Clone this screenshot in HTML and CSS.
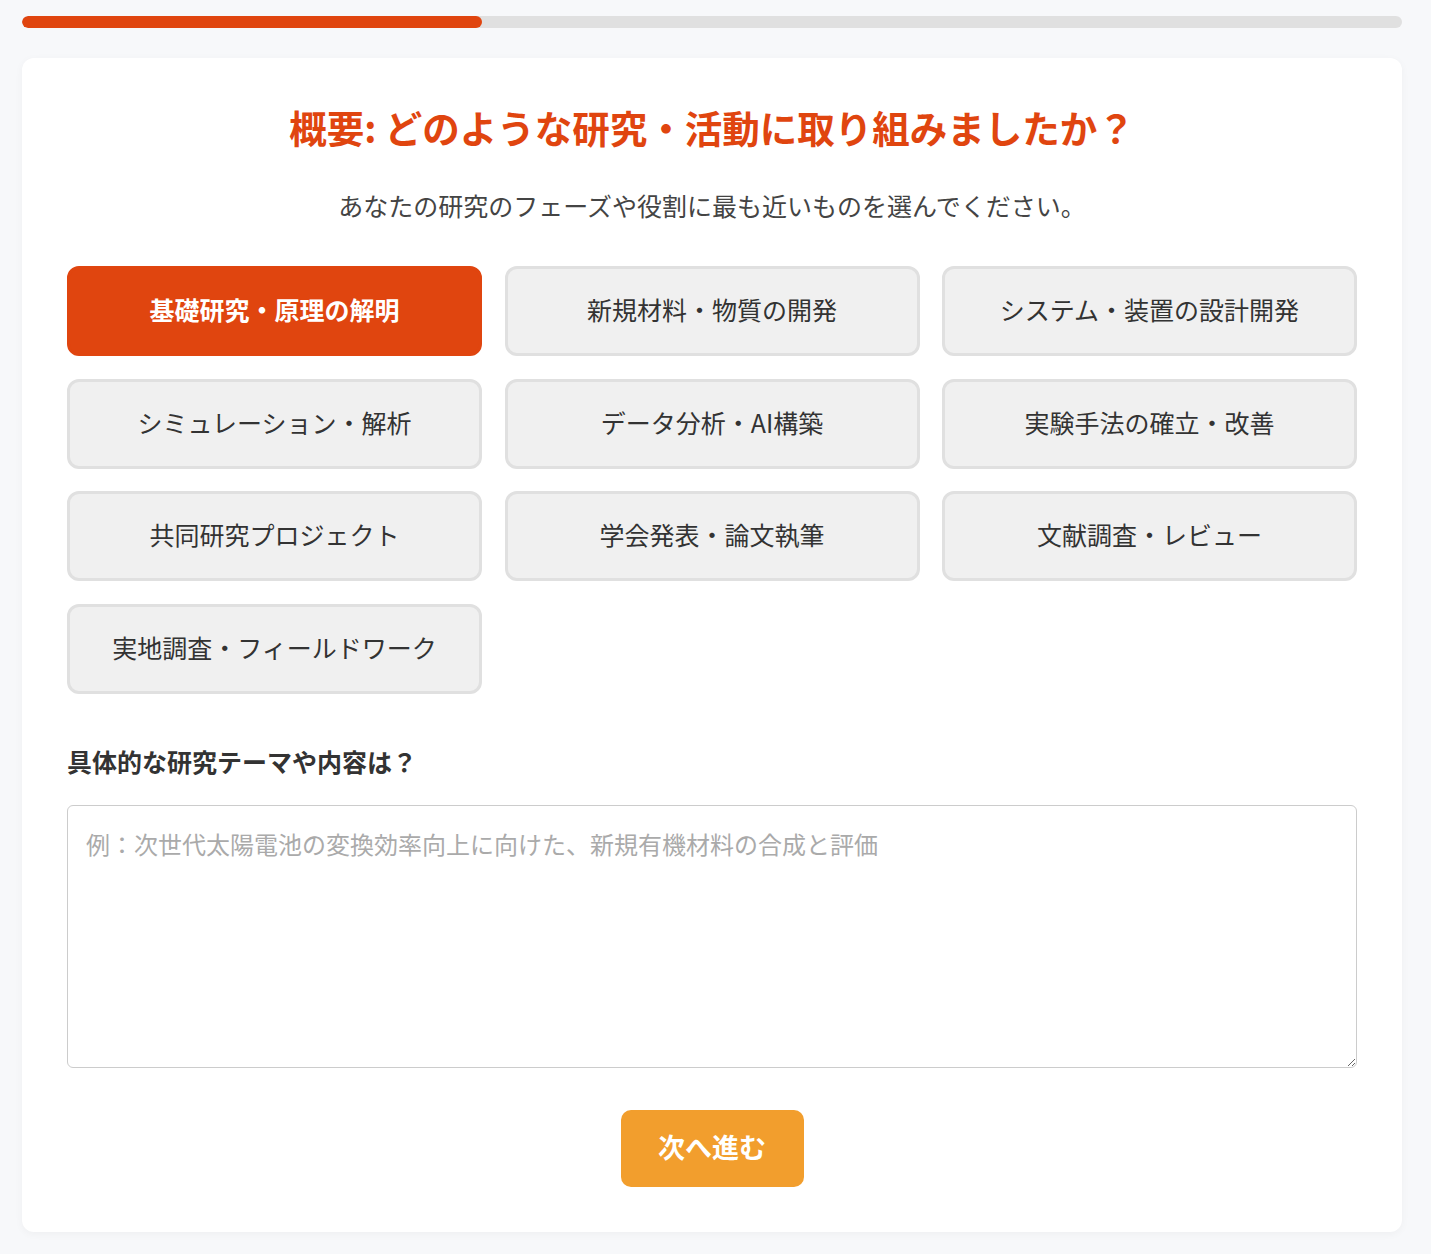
FILE: index.html
```html
<!DOCTYPE html>
<html lang="ja">
<head>
	<meta charset="utf-8">
	<title>研究概要</title>
	<link rel="stylesheet" href="styles.css">
</head>
<body>
<div class="wrap">
	<div class="progress"><div class="progress-fill" style="width:33.33%"></div></div>

	<div class="card">
		<h1 class="title">概要: どのような研究・活動に取り組みましたか？</h1>
		<p class="lead">あなたの研究のフェーズや役割に最も近いものを選んでください。</p>

		<div class="options">
			<button class="opt selected">基礎研究・原理の解明</button>
			<button class="opt">新規材料・物質の開発</button>
			<button class="opt">システム・装置の設計開発</button>
			<button class="opt">シミュレーション・解析</button>
			<button class="opt">データ分析・AI構築</button>
			<button class="opt">実験手法の確立・改善</button>
			<button class="opt">共同研究プロジェクト</button>
			<button class="opt">学会発表・論文執筆</button>
			<button class="opt">文献調査・レビュー</button>
			<button class="opt">実地調査・フィールドワーク</button>
		</div>

		<label class="label" for="theme">具体的な研究テーマや内容は？</label>
		<textarea id="theme" class="theme" placeholder="例：次世代太陽電池の変換効率向上に向けた、新規有機材料の合成と評価"></textarea>

		<div class="actions">
			<button class="next">次へ進む</button>
		</div>
	</div>
</div>
</body>
</html>
```

FILE: styles.css
```css
html,body{margin:0;padding:0;}
body{background:#f7f8fa;color:#333;font:24px/1.5 "Noto Sans CJK JP","Noto Sans",sans-serif;}
h1,p{margin:0;}

.wrap{width:1380px;margin:0 0 0 22px;padding:16px 0 22px;}

.progress{height:12px;background:#e0e0e0;border-radius:6px;overflow:hidden;}
.progress-fill{height:100%;background:#e0450f;border-radius:6px;}

.card{margin-top:30px;background:#fff;border-radius:12px;padding:42px 45px 45px;box-shadow:0 2px 8px rgba(0,0,0,0.04);}

.title{color:#e0450f;font-size:37.5px;font-weight:700;text-align:center;line-height:54px;}
.lead{color:#444;font-size:25px;line-height:36px;text-align:center;margin-top:33px;}

.options{display:grid;grid-template-columns:repeat(3,1fr);gap:22.5px;margin-top:43px;}
.opt{height:90px;padding:0 0 4px;background:#f0f0f0;border:3px solid #e0e0e0;border-radius:12px;color:#333;font:25px/36px "Noto Sans CJK JP","Noto Sans",sans-serif;cursor:pointer;}
.opt.selected{background:#e0450f;border-color:#e0450f;color:#fff;font-weight:700;}

.label{display:block;margin-top:49px;font-size:25px;line-height:36px;font-weight:700;color:#333;}
.theme{display:block;box-sizing:border-box;width:100%;height:263px;margin-top:26px;padding:20px 18px;border:1px solid #ccc;border-radius:6px;font:24px/36px "Noto Sans CJK JP","Noto Sans",sans-serif;color:#333;}
.theme::placeholder{color:#aaa;}

.actions{display:flex;justify-content:center;margin-top:42px;}
.next{width:183px;height:77px;padding:0 0 3px;background:#f29e2d;border:0;border-radius:10px;color:#fff;font:700 27px/36px "Noto Sans CJK JP","Noto Sans",sans-serif;cursor:pointer;}
```
